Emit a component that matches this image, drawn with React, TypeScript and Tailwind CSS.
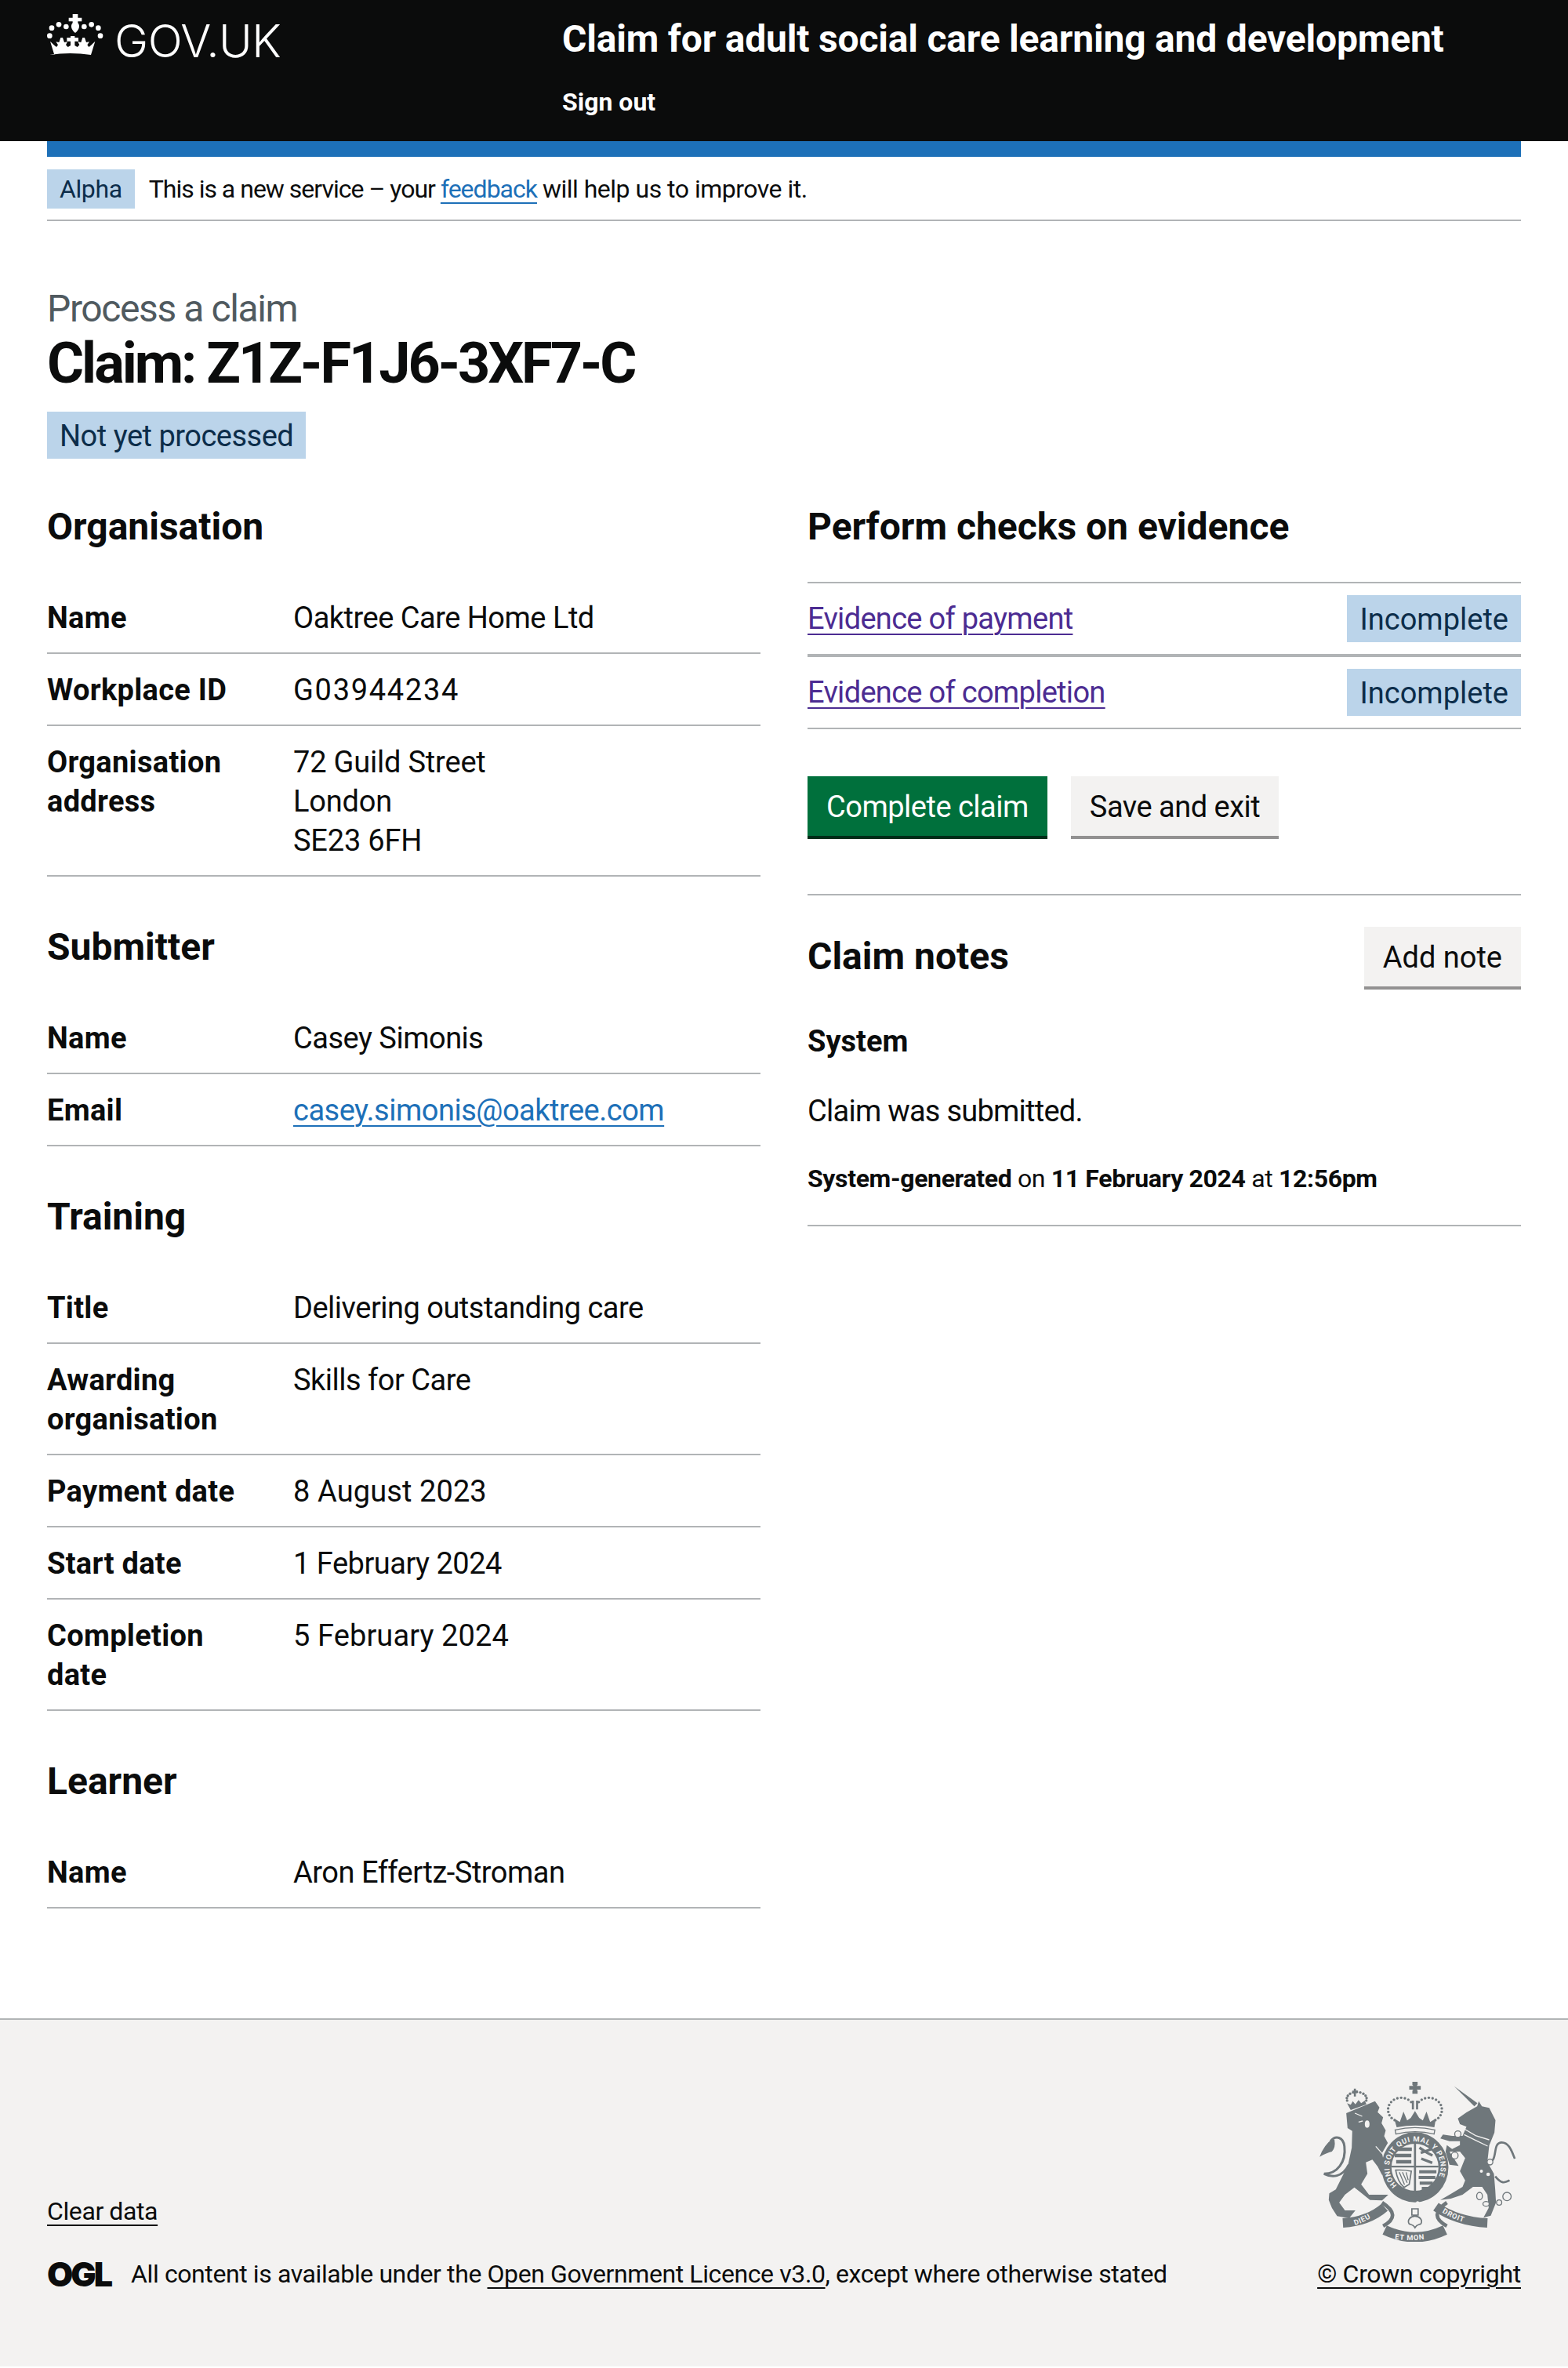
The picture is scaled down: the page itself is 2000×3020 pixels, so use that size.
const KeyRow = ({ label, children }: { label: string; children: React.ReactNode }) => (
  <div className="flex border-b-2 border-[#b1b4b6] pt-[21px] pb-[19px]">
    <div className="w-[314px] shrink-0 pr-10 font-bold tracking-[0.3px]">{label}</div>
    <div className="flex-1">{children}</div>
  </div>
);

const Section = ({ title, rows }: { title: string; rows: [string, React.ReactNode][] }) => (
  <section className="mb-[60px]">
    <h2 className="mb-10 text-[48px] leading-[60px] font-bold tracking-normal">{title}</h2>
    {rows.map(([label, value]) => (
      <KeyRow key={label} label={label}>
        {value}
      </KeyRow>
    ))}
  </section>
);

const Tag = ({ children }: { children: React.ReactNode }) => (
  <span className="inline-flex h-[60px] items-center bg-[#bbd4ea] px-4 pt-[2px] text-[#0c2d4a]">{children}</span>
);

const Crown = () => (
  <svg viewBox="60 52 216 159" className="mb-[15px] h-[53px] w-[72px] shrink-0 fill-white">
    {[[70, 135], [78, 105], [105, 92], [133, 100], [202, 100], [230, 92], [256, 105], [264, 135]].map(([x, y]) => (
      <circle key={x} cx={x} cy={y} r="10" />
    ))}
    <path d="M158 52h20v14h15v14h-15v6c8 8 8 24-10 38-18-14-18-30-10-38v-6h-15V66h15z" />
    <path d="M88 208 72 156l14 14 10 8 6-8-8-12 12 2 6-18h8l6 18 12-2-6 12 8 8 10-6v-16h-14v-14h14v-6h16v6h14v14h-14v16l10 6 8-8-6-12 12 2 6-18h8l6 18 12-2-8 12 6 8 10-8 14-14-16 52q-80-12-158 0z" />
  </svg>
);

const beads = (cx: number, cy: number, rx: number, ry: number, from: number, to: number, n: number, r: number) =>
  Array.from({ length: n }, (_, i) => {
    const a = ((from + ((to - from) * i) / (n - 1)) * Math.PI) / 180;
    return <circle key={`${cx}-${i}`} cx={cx + rx * Math.cos(a)} cy={cy + ry * Math.sin(a)} r={r} />;
  });

const Crest = () => (
  <svg viewBox="100 75 755 615" className="mr-[6px] h-[205px] w-[252px] fill-[#6f777b] tracking-normal">
    <defs>
      <path id="garter" d="M399 474A98 98 0 1 1 537 474" />
      <path id="ribbon-left" d="M228 630Q290 612 342 568" />
      <path id="ribbon-mid" d="M380 678Q468 692 556 672" />
      <path id="ribbon-right" d="M566 574Q636 620 725 630" />
    </defs>

    {/* lion */}
    <path d="M205 198 315 152 332 176 325 194 346 214 340 236 356 264 350 286 364 312 342 350 350 392 364 420 342 434 325 402 305 376 280 386 286 430 262 470 292 510 322 510 366 510 342 532 296 530 236 482 200 510 178 540 200 570 240 570 216 600 170 592 150 560 138 530 140 505 165 490 195 430 212 395 226 330 228 266 210 255z" />
    <path d="M215 395C190 445 150 445 120 430 170 430 205 385 198 325 194 290 165 280 145 305" className="fill-none stroke-[#6f777b] stroke-[9]" />
    <path d="M150 298Q120 320 103 365 130 350 150 345 165 330 160 300z" />
    <path d="M238 198l28 12M252 232l16-4" className="fill-none stroke-[#f3f2f1] stroke-[4]" />
    <ellipse cx="285" cy="240" rx="9" ry="14" className="fill-[#f3f2f1]" />
    <path d="M318 325l46 52" className="fill-none stroke-[#f3f2f1] stroke-[4]" />
    {/* lion crown */}
    <g>
      {beads(245, 143, 38, 26, 165, 375, 11, 5)}
      <path d="M228 112h6v-8h8v8h8v8h-8v14h-8v-14h-6z" />
      <path d="M208 160l14 6 8-14 10 12 12-16 10 12 14-10 6 14-60 22z" />
    </g>

    {/* unicorn */}
    <path d="M618 95 707 160 695 172z" />
    <path d="M632 218 665 195 706 172 712 152 724 172 752 178 776 225 772 272 752 322 745 385 770 430 775 490 778 540 758 590 730 598 750 560 745 510 725 480 690 480 650 510 605 525 565 530 600 510 650 480 660 455 640 420 660 370 640 345 600 345 635 400 600 395 585 345 590 320 610 335 640 320 640 305 600 305 565 295 575 280 610 285 650 285 665 250 640 240z" />
    <path d="M745 385C790 390 760 310 800 310 830 310 840 350 850 372M775 440C800 470 810 465 830 455" className="fill-none stroke-[#6f777b] stroke-[8]" />
    <path d="M656 258 700 284 752 300" className="fill-none stroke-[#f3f2f1] stroke-[4]" />
    <path d="M656 280l44 22 46 22" className="fill-none stroke-[#f3f2f1] stroke-[4]" />
    <circle cx="748" cy="432" r="7" className="fill-[#f3f2f1]" />
    <circle cx="722" cy="420" r="6" className="fill-[#f3f2f1]" />
    <g className="fill-[#f3f2f1] stroke-[#6f777b] stroke-[4]">
      <circle cx="632" cy="278" r="12" />
      <circle cx="620" cy="360" r="13" />
      <circle cx="755" cy="385" r="11" />
      <ellipse cx="715" cy="515" rx="11" ry="14" />
      <ellipse cx="740" cy="545" rx="12" ry="9" />
      <circle cx="790" cy="540" r="10" />
      <circle cx="820" cy="517" r="16" />
    </g>

    {/* top crown */}
    <g>
      {beads(415, 185, 50, 46, 120, 320, 13, 5)}
      {beads(521, 185, 50, 46, -140, 60, 13, 5)}
      <path d="M458 78h20v12l-4 4h16v14h-16l4 4v12h-20v-12l4-4h-16V94h16l-4-4z" />
      <path d="M456 150h8v34h-8zM472 150h8v34h-8z" />
      <path d="M388 218l22 14 14-40 14 34 14-10 16-26 16 26 14 10 14-34 14 40 22-14-6 34q-72-14-144 0z" />
      <path d="M392 262q76-18 152 0l-3 16q-72-18-146 0z" className="fill-[#f3f2f1] stroke-[#6f777b] stroke-[4]" />
    </g>

    {/* garter and shield */}
    <ellipse cx="468" cy="405" rx="128" ry="134" />
    <circle cx="468" cy="405" r="90" className="fill-[#f3f2f1]" />
    <text className="fill-[#f3f2f1] text-[28px] font-bold tracking-[2px]">
      <textPath href="#garter">HONI SOIT QUI MAL Y PENSE</textPath>
    </text>
    <path d="M464 312h8v200h-8zM378 399h180v7H378z" />
    <g className="fill-none stroke-[#6f777b]">
      <path d="M398 336h58M390 360h64M396 384h58" className="stroke-[13]" />
      <path d="M485 330l30 20 20 10M490 350l40-14M492 372l42 16" className="stroke-[10]" />
      <path d="M484 422h66M482 444h64M486 466h50M494 486h30" className="stroke-[12]" />
      <path d="M394 416q30-2 60 4l-8 50-20 12q-24-20-32-66z" className="stroke-[5]" />
      <path d="M408 424l20 48M420 424l18 40M434 424l8 30" className="stroke-[4]" />
    </g>
    <path d="M390 495q78 48 156 0l-10 22q-68 40-134 0z" />
    <circle cx="478" cy="541" r="6" className="fill-[#f3f2f1]" />

    {/* motto ribbon */}
    <g className="fill-none stroke-[#6f777b]">
      <path d="M192 618Q290 612 352 558" className="stroke-[36]" />
      <path d="M352 645Q468 700 583 645" className="stroke-[38]" />
      <path d="M548 556Q630 612 745 618" className="stroke-[36]" />
      <path d="M342 540Q420 590 346 630M590 540Q516 590 590 630" className="stroke-[14]" />
      <path d="M468 592c-16 0-32 14-22 30 8 4 14 0 22 14 8-14 14-10 22-14 10-16-6-30-22-30zM456 564h24v24h-24z" className="stroke-[5]" />
    </g>
    <g className="fill-[#f3f2f1] text-[28px] font-bold tracking-[2px]">
      <text><textPath href="#ribbon-left" startOffset="8%">DIEU</textPath></text>
      <text><textPath href="#ribbon-mid" startOffset="6%">ET MON</textPath></text>
      <text><textPath href="#ribbon-right" startOffset="4%">DROIT</textPath></text>
    </g>
  </svg>
);

const App = () => {
  return (
    <div className="min-h-[3020px] bg-white font-['Roboto',sans-serif] text-[38px] leading-[50px] tracking-[-0.5px] text-[#0b0c0c]">
      <header className="flex h-[180px] bg-[#0b0c0c] px-[60px] text-white">
        <div className="flex h-[90px] w-[657px] shrink-0 items-center gap-[14px] pt-[14px]">
          <Crown />
          <span className="font-['Inter',sans-serif] text-[58px] leading-none font-light tracking-[-0.5px]">GOV.UK</span>
        </div>
        <div className="whitespace-nowrap">
          <div className="pt-[20px] text-[48px] leading-[60px] font-bold tracking-[-0.2px]">Claim for adult social care learning and development</div>
          <a className="mt-[30px] block text-[32px] leading-[40px] font-bold tracking-normal">Sign out</a>
        </div>
      </header>

      <div className="px-[60px]">
        <div className="h-5 bg-[#1d70b8]" />
        <div className="flex h-[82px] items-start gap-[18px] border-b-2 border-[#b1b4b6] pt-4 text-[32px] leading-[50px] tracking-[-1px]">
          <span className="inline-flex h-[50px] items-center bg-[#bbd4ea] px-4 tracking-[-0.4px] text-[#0c2d4a]">Alpha</span>
          <p>
            This is a new service – your{" "}
            <a className="text-[#1d70b8] underline decoration-2 underline-offset-[6px]">feedback</a>{" "}
            <span className="tracking-[-0.5px]">will help us to improve it.</span>
          </p>
        </div>

        <main className="pt-[82px]">
          <span className="block text-[48px] leading-[60px] tracking-[-1.4px] text-[#505a5f]">Process a claim</span>
          <h1 className="text-[72px] leading-[80px] font-bold tracking-[-3px]">Claim: Z1Z-F1J6-3XF7-C</h1>
          <div className="mt-[21px] mb-[57px]">
            <Tag>Not yet processed</Tag>
          </div>

          <div className="grid grid-cols-2 gap-[60px]">
            <div>
              <Section
                title="Organisation"
                rows={[
                  ["Name", "Oaktree Care Home Ltd"],
                  ["Workplace ID", <span className="tracking-[1.7px]">G03944234</span>],
                  ["Organisation address", <span className="tracking-[-0.2px]">72 Guild Street<br />London<br />SE23 6FH</span>],
                ]}
              />
              <Section
                title="Submitter"
                rows={[
                  ["Name", "Casey Simonis"],
                  ["Email", <a className="text-[#1d70b8] underline decoration-2 underline-offset-[6px]">casey.simonis@oaktree.com</a>],
                ]}
              />
              <Section
                title="Training"
                rows={[
                  ["Title", "Delivering outstanding care"],
                  ["Awarding organisation", "Skills for Care"],
                  ["Payment date", <span className="tracking-[0.1px]">8 August 2023</span>],
                  ["Start date", "1 February 2024"],
                  ["Completion date", <span className="tracking-[0.1px]">5 February 2024</span>],
                ]}
              />
              <Section title="Learner" rows={[["Name", "Aron Effertz-Stroman"]]} />
            </div>

            <div>
              <h2 className="mb-10 text-[48px] leading-[60px] font-bold tracking-normal">Perform checks on evidence</h2>
              <div className="border-t-2 border-[#b1b4b6]">
                <div className="flex h-[94px] items-center justify-between border-b-4 border-[#b1b4b6]">
                  <a className="tracking-[-0.7px] text-[#4c2c92] underline decoration-2 underline-offset-[6px]">Evidence of payment</a>
                  <span className="tracking-normal"><Tag>Incomplete</Tag></span>
                </div>
                <div className="flex h-[92px] items-center justify-between border-b-2 border-[#b1b4b6]">
                  <a className="tracking-[-0.7px] text-[#4c2c92] underline decoration-2 underline-offset-[6px]">Evidence of completion</a>
                  <span className="tracking-normal"><Tag>Incomplete</Tag></span>
                </div>
              </div>
              <div className="mt-[60px] flex gap-[30px]">
                <button className="h-[76px] bg-[#00703c] px-6 pt-[2px] text-white shadow-[0_4px_0_#002d18]">Complete claim</button>
                <button className="h-[76px] bg-[#f3f2f1] px-6 pt-[2px] shadow-[0_4px_0_#929191]">Save and exit</button>
              </div>
              <div className="mt-[74px] flex items-center justify-between border-t-2 border-[#b1b4b6] pt-10">
                <h2 className="text-[48px] leading-[60px] font-bold tracking-normal">Claim notes</h2>
                <button className="h-[76px] bg-[#f3f2f1] px-6 pt-[2px] tracking-normal shadow-[0_4px_0_#929191]">Add note</button>
              </div>
              <div className="border-b-2 border-[#b1b4b6] pb-[34px]">
                <p className="mt-[45px] font-bold tracking-normal">System</p>
                <p className="mt-[39px] tracking-[-0.75px]">Claim was submitted.</p>
                <p className="mt-[36px] text-[32px] leading-[50px] tracking-[-0.35px]">
                  <b>System-generated</b> on <b>11 February 2024</b> at <b>12:56pm</b>
                </p>
              </div>
            </div>
          </div>
        </main>
      </div>

      <footer className="mt-[80px] flex h-[444px] items-end justify-between border-t-2 border-[#b1b4b6] bg-[#f3f2f1] px-[60px] pb-[98px] text-[32px] leading-[40px] tracking-[-0.4px]">
        <div>
          <a className="underline decoration-2 underline-offset-[6px]">Clear data</a>
          <div className="mt-[40px] flex items-center gap-[26px]">
            <span className="font-['Inter',sans-serif] text-[43px] leading-[40px] font-black tracking-[-3px]">OGL</span>
            <span>
              All content is available under the{" "}
              <a className="underline decoration-2 underline-offset-[6px]">Open Government Licence v3.0</a>, except where otherwise stated
            </span>
          </div>
        </div>
        <div className="flex flex-col items-end">
          <Crest />
          <a className="mt-[21px] tracking-[-0.3px] underline decoration-2 underline-offset-[6px]">© Crown copyright</a>
        </div>
      </footer>
    </div>
  );
};

export default App;
